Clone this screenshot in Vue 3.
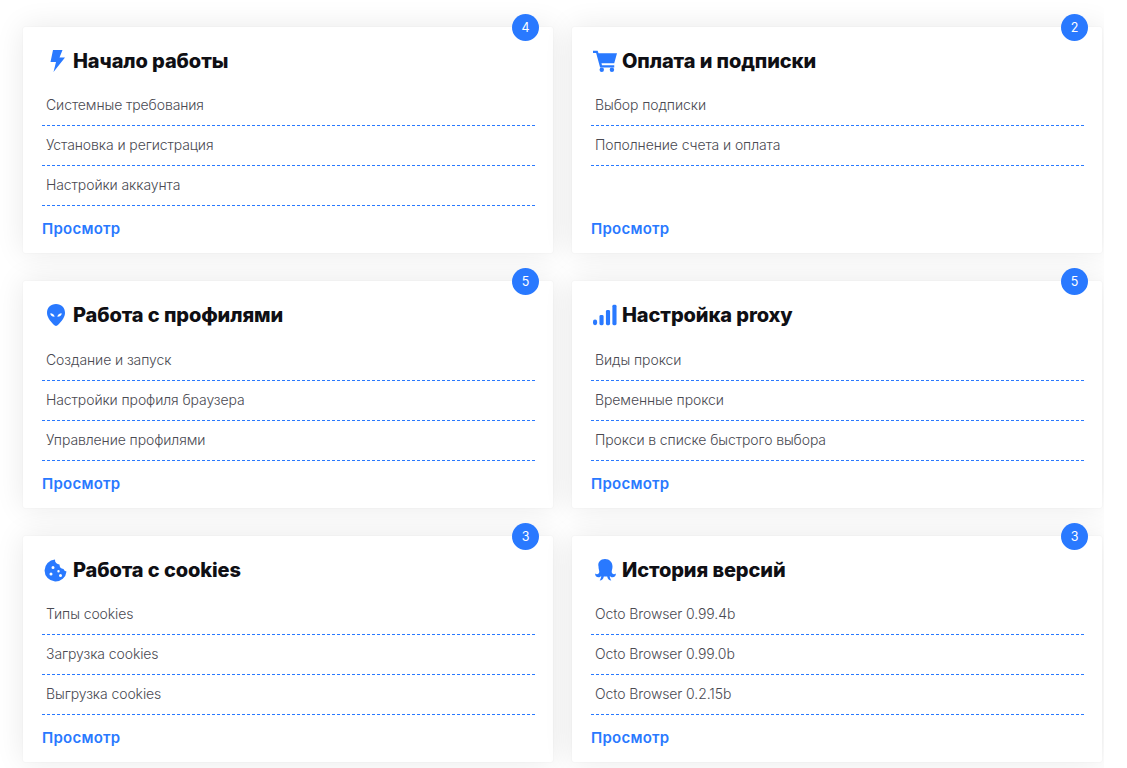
<script setup>
const cards = [
  { title: 'Начало работы', count: 4, icon: 'bolt', items: ['Системные требования', 'Установка и регистрация', 'Настройки аккаунта'] },
  { title: 'Оплата и подписки', count: 2, icon: 'cart', items: ['Выбор подписки', 'Пополнение счета и оплата'] },
  { title: 'Работа с профилями', count: 5, icon: 'alien', items: ['Создание и запуск', 'Настройки профиля браузера', 'Управление профилями'] },
  { title: 'Настройка proxy', count: 5, icon: 'signal', items: ['Виды прокси', 'Временные прокси', 'Прокси в списке быстрого выбора'] },
  { title: 'Работа с cookies', count: 3, icon: 'cookie', items: ['Типы cookies', 'Загрузка cookies', 'Выгрузка cookies'] },
  { title: 'История версий', count: 3, icon: 'octo', items: ['Octo Browser 0.99.4b', 'Octo Browser 0.99.0b', 'Octo Browser 0.2.15b'] },
]
</script>

<template>
  <main class="page">
    <section v-for="card in cards" :key="card.title" class="card">
      <span class="badge">{{ card.count }}</span>
      <h2 class="title">
        <span class="icon">
          <svg v-if="card.icon === 'bolt'" viewBox="0 0 24 24" class="svg">
            <path d="M9 1h9.500l-3 7.500H21L9.500 23l2.500-10H6.500z" />
          </svg>
          <svg v-else-if="card.icon === 'cart'" viewBox="0 0 26 24" class="svg">
            <path d="M0 1h5l1 2.500h20l-3 11H9.200l.5 2.200H23v2.300H7.700L3.400 3.300H0z" />
            <circle cx="9.500" cy="21.500" r="2.400" />
            <circle cx="20.500" cy="21.500" r="2.400" />
          </svg>
          <svg v-else-if="card.icon === 'alien'" viewBox="0 0 24 24" class="svg">
            <path fill-rule="evenodd" d="M12 1C6.500 1 3 4.700 3 10c0 5 5.500 10.800 7.800 12.500.8.600 1.600.600 2.400 0C15.500 20.800 21 15 21 10c0-5.300-3.500-9-9-9zM6.300 10.300c2.300 0 4 1.200 4.300 3.500-2.400.1-4.300-1.100-4.300-3.500zm11.400 0c0 2.400-1.900 3.600-4.300 3.500.3-2.300 2-3.500 4.300-3.500z" />
          </svg>
          <svg v-else-if="card.icon === 'signal'" viewBox="0 0 26 24" class="svg">
            <rect x="0" y="17" width="4.500" height="6" rx="2.200" />
            <rect x="7" y="12" width="4.500" height="11" rx="1.600" />
            <rect x="14" y="6.500" width="4.500" height="16.500" rx="1.600" />
            <rect x="21" y="1" width="4.500" height="22" rx="1.600" />
          </svg>
          <svg v-else-if="card.icon === 'cookie'" viewBox="0 0 24 24" class="svg">
            <path fill-rule="evenodd" d="M11 1.500a4.500 4.500 0 0 0 4.500 5 4.500 4.500 0 0 0 4 4.500 3.500 3.500 0 0 0 3 2.500A11 11 0 1 1 11 1.500zM9 8a1.500 1.500 0 1 0 0 3 1.500 1.500 0 0 0 0-3zm-2 6.500a1.500 1.500 0 1 0 0 3 1.500 1.500 0 0 0 0-3zm7.500-2.500a1.200 1.200 0 1 0 0 2.400 1.200 1.200 0 0 0 0-2.400zm2 4a1.500 1.500 0 1 0 0 3 1.500 1.500 0 0 0 0-3z" />
          </svg>
          <svg v-else viewBox="0 0 24 24" class="svg">
            <path d="M12 1c4.500 0 7.500 3.200 7.500 7.500 0 2.500-.8 3.800-.8 5.300 0 1.500 1 2.500 2.300 2.500.7 0 1.300-.3 1.800-.8.300 2-1.200 3.800-3.300 3.800-1.100 0-2-.5-2.700-1.300 0 1.800.6 3 1.500 4.500-2 0-3.700-1.500-4.100-4h-3.400c-.4 2.500-2.100 4-4.100 4 .9-1.500 1.500-2.700 1.500-4.500-.7.800-1.600 1.300-2.700 1.300-2.100 0-3.600-1.800-3.300-3.800.5.500 1.100.8 1.800.8 1.300 0 2.300-1 2.300-2.500 0-1.500-.8-2.800-.8-5.300C4.500 4.200 7.500 1 12 1z" />
          </svg>
        </span>
        {{ card.title }}
      </h2>
      <ul class="list">
        <li v-for="item in card.items" :key="item" class="row">{{ item }}</li>
      </ul>
      <a class="more">Просмотр</a>
    </section>
  </main>
</template>

<style scoped>
.page {
  display: grid;
  grid-template-columns: 530px 530px;
  grid-auto-rows: 226.4px;
  column-gap: 19px;
  row-gap: 28px;
  padding: 27px 0 0 23px;
  width: 1104px;
  box-sizing: border-box;
  height: 768px;
  overflow: hidden;
  font-family: "Inter", "Roboto", sans-serif;
}
.card {
  position: relative;
  display: flex;
  flex-direction: column;
  box-sizing: border-box;
  padding: 19px 18px 0 19px;
  background: #fff;
  border-radius: 2px;
  box-shadow: 0 0 30px rgba(0, 0, 0, 0.09), 0 0 2px rgba(0, 0, 0, 0.06);
}
.badge {
  position: absolute;
  top: -13px;
  right: 14px;
  width: 27px;
  height: 27px;
  border-radius: 50%;
  background: #2979ff;
  color: #fff;
  font-size: 12.500px;
  line-height: 27px;
  text-align: center;
}
.title {
  display: flex;
  align-items: center;
  margin: 0;
  height: 30px;
  font-size: 20px;
  font-weight: 800;
  letter-spacing: -0.1px;
  color: #0f0f14;
}
.icon {
  display: flex;
  justify-content: center;
  align-items: center;
  flex: none;
  width: 31px;
  height: 24px;
  padding-right: 3px;
  box-sizing: border-box;
}
.svg {
  width: 24px;
  height: 24px;
  fill: #2979ff;
}
.list {
  list-style: none;
  margin: 10.300px 0 0;
  padding: 0;
  height: 120px;
}
.row {
  box-sizing: border-box;
  height: 40px;
  padding: 5.200px 0 0 4px;
  line-height: 28px;
  font-size: 14px;
  font-weight: 300;
  letter-spacing: -0.1px;
  color: #4a4a52;
  border-bottom: 1px dashed #2979ff;
}
.more {
  margin-top: 12px;
  font-size: 15px;
  font-weight: 600;
  letter-spacing: 0.25px;
  line-height: 22px;
  color: #2979ff;
  cursor: pointer;
}
</style>
